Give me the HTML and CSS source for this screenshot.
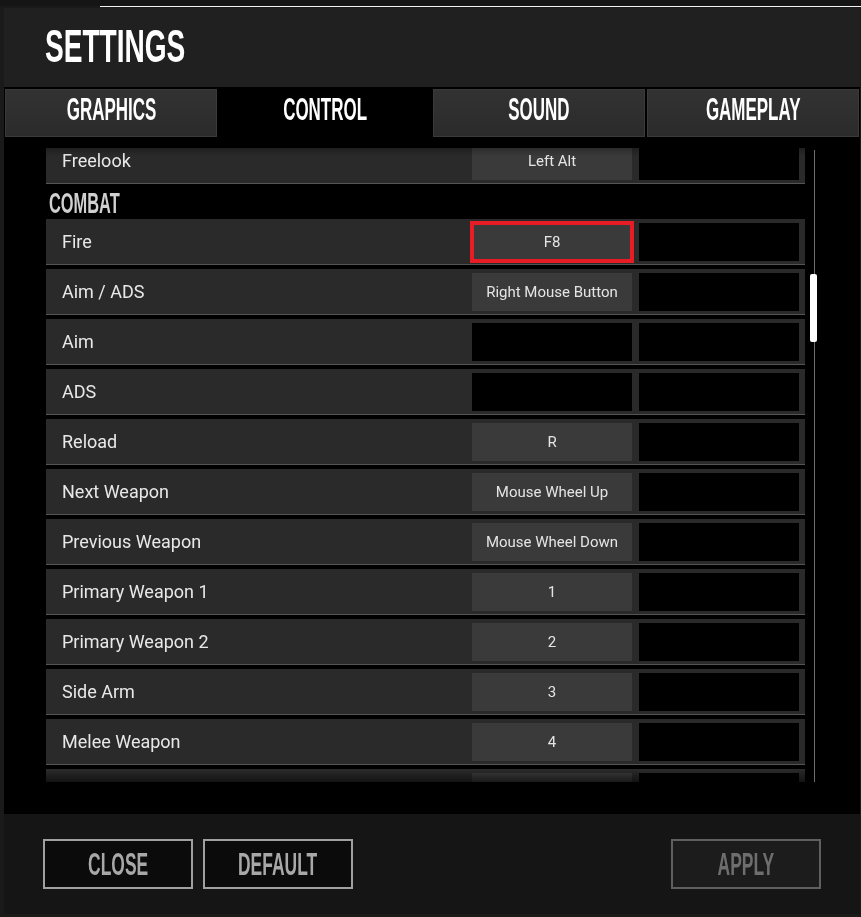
FILE: index.html
```html
<!DOCTYPE html>
<html lang="en">
<head>
<meta charset="utf-8">
<title>Settings</title>
<link rel="stylesheet" href="styles.css">
</head>
<body>
<div class="topstrip"></div>
<div class="topline"></div>
<div class="panel">
  <header class="header">
    <h1 class="title"><span class="cond cond-title">SETTINGS</span></h1>
  </header>
  <nav class="tabs">
    <div class="tab"><span class="cond">GRAPHICS</span></div>
    <div class="tab tab-active"><span class="cond">CONTROL</span></div>
    <div class="tab"><span class="cond">SOUND</span></div>
    <div class="tab"><span class="cond">GAMEPLAY</span></div>
  </nav>
  <main class="content">
    <div class="viewport">
      <div class="list">
        <div class="row"><div class="label">Freelook</div><div class="key">Left Alt</div><div class="key key-alt"></div></div>
        <div class="section"><span class="cond cond-section">COMBAT</span></div>
        <div class="row"><div class="label">Fire</div><div class="key key-selected">F8</div><div class="key key-alt"></div></div>
        <div class="row"><div class="label">Aim / ADS</div><div class="key">Right Mouse Button</div><div class="key key-alt"></div></div>
        <div class="row"><div class="label">Aim</div><div class="key key-empty"></div><div class="key key-alt"></div></div>
        <div class="row"><div class="label">ADS</div><div class="key key-empty"></div><div class="key key-alt"></div></div>
        <div class="row"><div class="label">Reload</div><div class="key">R</div><div class="key key-alt"></div></div>
        <div class="row"><div class="label">Next Weapon</div><div class="key">Mouse Wheel Up</div><div class="key key-alt"></div></div>
        <div class="row"><div class="label">Previous Weapon</div><div class="key">Mouse Wheel Down</div><div class="key key-alt"></div></div>
        <div class="row"><div class="label">Primary Weapon 1</div><div class="key">1</div><div class="key key-alt"></div></div>
        <div class="row"><div class="label">Primary Weapon 2</div><div class="key">2</div><div class="key key-alt"></div></div>
        <div class="row"><div class="label">Side Arm</div><div class="key">3</div><div class="key key-alt"></div></div>
        <div class="row"><div class="label">Melee Weapon</div><div class="key">4</div><div class="key key-alt"></div></div>
        <div class="row"><div class="label"></div><div class="key"></div><div class="key key-alt"></div></div>
      </div>
    </div>
    <div class="scrollbar"><div class="thumb"></div></div>
  </main>
  <footer class="footer">
    <div class="btn-group">
      <button class="btn"><span class="cond">CLOSE</span></button>
      <button class="btn"><span class="cond">DEFAULT</span></button>
    </div>
    <button class="btn btn-disabled"><span class="cond">APPLY</span></button>
  </footer>
</div>
</body>
</html>
```

FILE: styles.css
```css
* { box-sizing: border-box; }

html, body {
  margin: 0;
  padding: 0;
  background: #1a1a18;
  width: 861px;
  height: 917px;
  overflow: hidden;
}

body {
  font-family: Roboto, "Liberation Sans", sans-serif;
  color: #e8e8e8;
}

.topstrip {
  height: 6px;
  background: #151515;
}

.topline {
  height: 1px;
  margin-left: 100px;
  background: #f2f2f2;
}

.panel {
  margin-top: 1px;
  margin-left: 4px;
  width: 856px;
  background: #000;
}

.cond {
  display: inline-block;
  font-family: "Liberation Sans", Arial, sans-serif;
  font-weight: 700;
  transform: scaleX(0.53);
  white-space: nowrap;
}

.header {
  height: 79px;
  background: #202020;
  padding: 15px 0 0 41px;
}

.title {
  margin: 0;
  font-size: 46px;
  line-height: 46px;
  font-weight: 700;
  color: #fff;
}

.cond-title {
  transform: scaleX(0.61);
  transform-origin: left center;
}

.tabs {
  display: grid;
  grid-template-columns: repeat(4, 212px);
  column-gap: 2px;
  padding: 2px 0 0 1px;
  background: #000;
}

.tab {
  height: 48px;
  border: 1px solid #3a3a3a;
  background: linear-gradient(to bottom, #323232, #2b2b2b);
  padding-bottom: 8px;
  line-height: 38px;
  font-size: 32px;
  color: #fff;
  text-align: center;
}

.tab-active {
  background: #000;
  border-color: #000;
}

.content {
  height: 677px;
  padding-top: 11px;
  padding-left: 42px;
  display: flex;
  align-items: flex-start;
  background: #000;
}

.viewport {
  width: 759px;
  height: 634px;
  overflow: hidden;
  -webkit-mask-image: linear-gradient(to bottom, rgba(0,0,0,0.75) 0, #000 8px, #000 622px, rgba(0,0,0,0.45) 634px);
  mask-image: linear-gradient(to bottom, rgba(0,0,0,0.75) 0, #000 8px, #000 622px, rgba(0,0,0,0.45) 634px);
}

.list {
  margin-top: -10px;
  display: flex;
  flex-direction: column;
}

.row {
  display: grid;
  grid-template-columns: 1fr 160px 160px;
  column-gap: 7px;
  height: 46px;
  padding: 4px 6px 3px 0;
  margin-bottom: 4px;
  background: #2a2a2a;
  border-bottom: 1px solid #555;
}

.label {
  padding-left: 16px;
  font-size: 18px;
  line-height: 38px;
  color: #e8e8e8;
}

.key {
  height: 38px;
  background: #3a3a3a;
  font-size: 15px;
  line-height: 38px;
  color: #e4e4e4;
  text-align: center;
  white-space: nowrap;
}

.key-alt,
.key-empty {
  background: #000;
}

.key-selected {
  outline: 4px solid #e81c24;
  outline-offset: -2px;
}

.section {
  height: 31px;
  line-height: 31px;
  padding-left: 3px;
  font-size: 29px;
  color: #d0d0d0;
}

.cond-section {
  transform: scaleX(0.565);
  transform-origin: left center;
}

.scrollbar {
  width: 8px;
  height: 632px;
  margin-top: 2px;
  margin-left: 5px;
  padding-top: 124px;
  background: linear-gradient(to right, transparent 4px, #6c6c6c 4px, #6c6c6c 5px, transparent 5px);
}

.thumb {
  width: 7px;
  height: 68px;
  background: #fff;
  border-radius: 2px;
}

.footer {
  margin-top: 0;
  height: 100px;
  background: #151515;
  padding: 25px 39px 0 39px;
  display: flex;
  justify-content: space-between;
  align-items: flex-start;
}

.btn-group {
  display: flex;
  gap: 10px;
}

.btn {
  width: 150px;
  height: 50px;
  margin: 0;
  padding: 0;
  border: 2px solid #a0a0a0;
  background: #0b0b0b;
  color: #a8a8a8;
  font-family: "Liberation Sans", Arial, sans-serif;
  font-size: 32px;
  line-height: 46px;
  text-align: center;
  cursor: pointer;
}

.btn .cond {
  transform: scaleX(0.545);
}

.btn-disabled {
  border-color: #5f5f5f;
  background: #1c1c1c;
  color: #6e6e6e;
}
```
